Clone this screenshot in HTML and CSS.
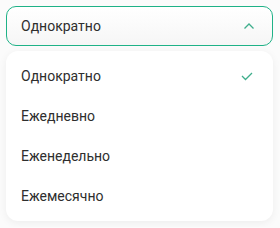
FILE: index.html
```html
<!DOCTYPE html>
<html lang="ru">

<head>
    <meta charset="UTF-8">
    <meta name="viewport" content="width=device-width, initial-scale=1.0">
    <title>Повтор</title>
    <link rel="stylesheet" href="styles.css">
</head>

<body>
    <div class="repeat-select">
        <button class="select-field" type="button">
            <span class="select-value">Однократно</span>
            <svg class="chevron" width="12" height="8" viewBox="0 0 12 8">
                <path d="M1.5 6.5 L6 2 L10.5 6.5" fill="none" stroke="#3fae8c" stroke-width="1.3" />
            </svg>
        </button>

        <ul class="select-menu">
            <li class="menu-item selected">
                <span>Однократно</span>
                <svg class="check" width="12" height="10" viewBox="0 0 12 10">
                    <path d="M1 5 L4.5 8.5 L11 2" fill="none" stroke="#3fae8c" stroke-width="1.3" />
                </svg>
            </li>
            <li class="menu-item">Ежедневно</li>
            <li class="menu-item">Еженедельно</li>
            <li class="menu-item">Ежемесячно</li>
        </ul>
    </div>
</body>

</html>
```

FILE: styles.css
```css
:root {
    --accent: #1fb287;
    --text-color: #2e2e2e;
    --background-color: #fbfbfb;
    --white: #ffffff;
}

* {
    box-sizing: border-box;
    margin: 0;
    padding: 0;
}

body {
    font-family: 'Roboto', 'Noto Sans', sans-serif;
    background-color: var(--background-color);
    padding: 6px 7px 6px 6px;
    color: var(--text-color);
}

.repeat-select {
    display: flex;
    flex-direction: column;
    gap: 5px;
}

.select-field {
    display: flex;
    align-items: center;
    justify-content: space-between;
    width: 100%;
    height: 40px;
    padding: 0 17px 0 14px;
    border: 1px solid var(--accent);
    border-radius: 10px;
    background: linear-gradient(#ffffff, #f6f6f6);
    font-family: inherit;
    font-size: 14px;
    color: var(--text-color);
    cursor: pointer;
}

.chevron {
    display: block;
}

.select-menu {
    list-style: none;
    background-color: var(--white);
    border-radius: 12px;
    box-shadow: 0 2px 8px rgba(0, 0, 0, 0.06);
    padding: 5px 0 5px;
}

.menu-item {
    display: flex;
    align-items: center;
    justify-content: space-between;
    height: 40px;
    padding: 0 20px 0 15px;
    font-size: 14px;
}

.menu-item .check {
    display: block;
}
```
